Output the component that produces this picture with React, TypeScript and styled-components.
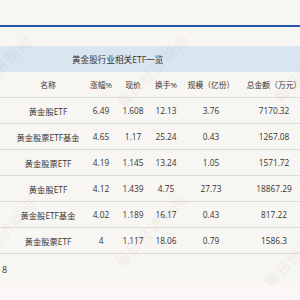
import React from 'react'
import styled, { createGlobalStyle } from 'styled-components'

const GlobalStyle = createGlobalStyle`
  html, body {
    margin: 0;
    padding: 0;
    background: #f8f6f2;
  }
`

const Page = styled.div`
  position: relative;
  width: 300px;
  height: 300px;
  overflow: hidden;
  background: #f8f6f2;
  font-family: "Open Sans", "Noto Sans CJK SC", sans-serif;
  color: #333;
  display: flex;
  flex-direction: column;
`

const BlueRule = styled.div`
  margin-top: 25px;
  height: 2px;
  background: #2459a9;
`

const TitleBand = styled.div`
  margin-top: 19px;
  height: 26px;
  background: #d9e5f0;
  display: flex;
  align-items: center;
  padding-left: 72px;
  font-size: 8.6px;
  white-space: nowrap;
`

const Row = styled.div`
  display: grid;
  grid-template-columns: 72px 34px 30px 36px 54px 72px;
  padding-left: 12px;
  height: 25px;
  align-items: center;
  border-bottom: 1px solid #dddad5;
  flex-shrink: 0;
`

const Cell = styled.div<{ $head?: boolean }>`
  text-align: center;
  white-space: nowrap;
  font-size: ${({ $head }) => ($head ? '7.8px' : '8.3px')};
`

const Footnote = styled.div`
  height: 31px;
  display: flex;
  align-items: center;
  padding-left: 2px;
  font-size: 9px;
`

const BottomStrip = styled.div`
  flex: 1;
  background: #faf7f6;
`

const Watermark = styled.span<{ $x: number; $y: number }>`
  position: absolute;
  left: ${({ $x }) => $x}px;
  top: ${({ $y }) => $y}px;
  transform: translate(-50%, -50%) rotate(-45deg);
  font-family: "Noto Sans CJK SC", sans-serif;
  font-size: 15px;
  font-weight: bold;
  letter-spacing: 1px;
  color: rgba(110, 100, 90, 0.06);
  white-space: nowrap;
  pointer-events: none;
`

const header = ['名称', '涨幅%', '现价', '换手%', '规模（亿份）', '总金额（万元）']

const rows = [
  ['黄金股ETF', '6.49', '1.608', '12.13', '3.76', '7170.32'],
  ['黄金股票ETF基金', '4.65', '1.17', '25.24', '0.43', '1267.08'],
  ['黄金股票ETF', '4.19', '1.145', '13.24', '1.05', '1571.72'],
  ['黄金股ETF', '4.12', '1.439', '4.75', '27.73', '18867.29'],
  ['黄金股ETF基金', '4.02', '1.189', '16.17', '0.43', '817.22'],
  ['黄金股票ETF', '4', '1.117', '18.06', '0.79', '1586.3'],
]

const marks = [
  { x: -5, y: 72 },
  { x: 152, y: 70 },
  { x: 310, y: 65 },
  { x: 0, y: 235 },
  { x: 150, y: 230 },
  { x: 300, y: 250 },
]

const App: React.FC = () => {
  return (
    <>
      <GlobalStyle />
      <Page>
        <BlueRule />
        <TitleBand>黄金股行业相关ETF一览</TitleBand>
        <Row>
          {header.map((h) => (
            <Cell key={h} $head>{h}</Cell>
          ))}
        </Row>
        {rows.map((r, i) => (
          <Row key={i}>
            {r.map((c, j) => (
              <Cell key={j}>{c}</Cell>
            ))}
          </Row>
        ))}
        <Footnote>8</Footnote>
        <BottomStrip />
        {marks.map((m, i) => (
          <Watermark key={i} $x={m.x} $y={m.y}>每日经济新闻</Watermark>
        ))}
      </Page>
    </>
  )
}

export default App
